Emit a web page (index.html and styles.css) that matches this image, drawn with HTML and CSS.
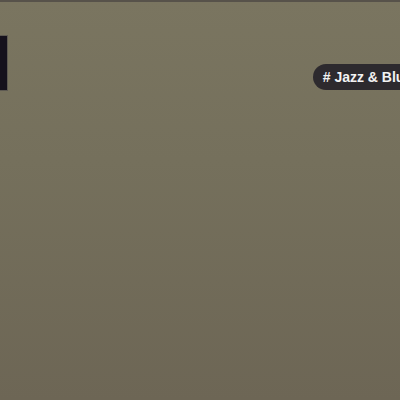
FILE: index.html
```html
<!DOCTYPE html>
<html>
<head>
<meta charset="utf-8">
<link rel="stylesheet" href="styles.css">
</head>
<body>
<div class="stage">
  <div class="topline"></div>
  <div class="row">
    <div class="panel"></div>
    <div class="tag"># Jazz &amp; Blues</div>
  </div>
</div>
</body>
</html>
```
FILE: styles.css
```css
html, body {
  margin: 0;
  padding: 0;
}
body {
  width: 400px;
  height: 400px;
  overflow: hidden;
  font-family: "Liberation Sans", Arial, sans-serif;
}
.stage {
  position: relative;
  width: 400px;
  height: 400px;
  background: linear-gradient(180deg, #7a7560 0%, #75705c 40%, #6d6655 100%);
  overflow: hidden;
}
.topline {
  height: 2px;
  background: #57524a;
}
.row {
  display: flex;
  justify-content: space-between;
  align-items: flex-start;
}
.panel {
  width: 7px;
  height: 54px;
  margin-top: 33px;
  background: #15111c;
  border: 1px solid #5e5a52;
  border-left: none;
}
.tag {
  margin-top: 62px;
  margin-right: -30px;
  height: 26px;
  line-height: 26px;
  padding: 0 10px;
  border-radius: 13px;
  background: #2d2a2e;
  color: #f2f2f2;
  font-size: 14px;
  font-weight: bold;
  white-space: nowrap;
}
```
